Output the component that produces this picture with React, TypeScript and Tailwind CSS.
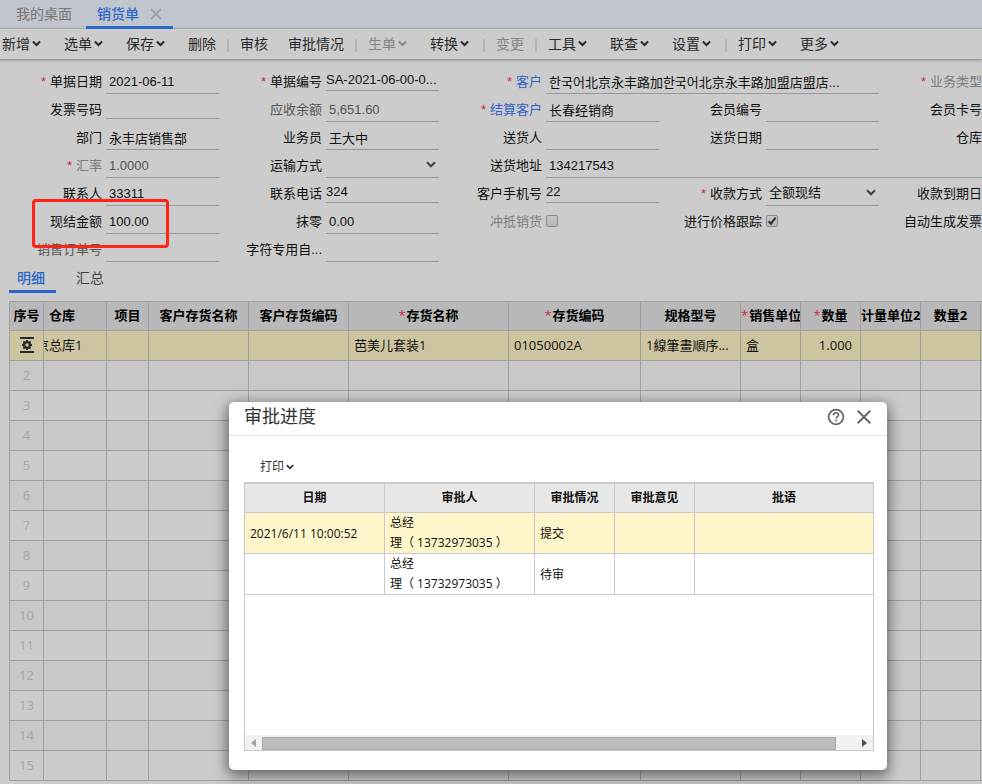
import React from 'react';

interface FormField {
  id: string;
  label: string;
  kind?: 'text' | 'select' | 'check';
  value?: string;
  checked?: boolean;
  required?: boolean;
  short?: boolean;
  tone?: string;
  span?: string;
}

const TABLE_FONT = "font-['Open_Sans','Noto_Sans_CJK_SC',sans-serif]";

const TOOLBAR: { label: string; menu?: boolean; disabled?: boolean; divider?: boolean }[] = [
  { label: '新增', menu: true },
  { label: '选单', menu: true },
  { label: '保存', menu: true },
  { label: '删除', divider: true },
  { label: '审核' },
  { label: '审批情况', divider: true },
  { label: '生单', menu: true, disabled: true },
  { label: '转换', menu: true, divider: true },
  { label: '变更', disabled: true, divider: true },
  { label: '工具', menu: true },
  { label: '联查', menu: true },
  { label: '设置', menu: true, divider: true },
  { label: '打印', menu: true },
  { label: '更多', menu: true },
];

const FIELDS: FormField[] = [
  { id: 'date', label: '单据日期', value: '2021-06-11', required: true },
  { id: 'code', label: '单据编号', value: 'SA-2021-06-00-0...', required: true, short: true },
  { id: 'customer', label: '客户', value: '한국어北京永丰路加한국어北京永丰路加盟店盟店...', required: true, tone: 'text-[#3264c8]', span: 'col-span-2' },
  { id: 'bizType', label: '业务类型', required: true, tone: 'text-[#7d7d7d]' },

  { id: 'invoiceNo', label: '发票号码', short: true },
  { id: 'receivable', label: '应收余额', value: '5,651.60', tone: 'text-[#555555]' },
  { id: 'settle', label: '结算客户', value: '长春经销商', required: true, tone: 'text-[#3264c8]' },
  { id: 'memberNo', label: '会员编号' },
  { id: 'cardNo', label: '会员卡号' },

  { id: 'dept', label: '部门', value: '永丰店销售部' },
  { id: 'clerk', label: '业务员', value: '王大中' },
  { id: 'deliverer', label: '送货人' },
  { id: 'deliverDate', label: '送货日期' },
  { id: 'warehouse', label: '仓库' },

  { id: 'rate', label: '汇率', value: '1.0000', required: true, tone: 'text-[#7d7d7d]' },
  { id: 'transport', label: '运输方式', kind: 'select', value: '' },
  { id: 'address', label: '送货地址', value: '134217543', span: 'col-span-3' },

  { id: 'contact', label: '联系人', value: '33311' },
  { id: 'phone', label: '联系电话', value: '324', short: true },
  { id: 'mobile', label: '客户手机号', value: '22', short: true },
  { id: 'payType', label: '收款方式', kind: 'select', value: '全额现结', required: true },
  { id: 'dueDate', label: '收款到期日' },

  { id: 'cash', label: '现结金额', value: '100.00' },
  { id: 'rounding', label: '抹零', value: '0.00' },
  { id: 'offset', label: '冲抵销货', kind: 'check', tone: 'text-[#7d7d7d]' },
  { id: 'trackPrice', label: '进行价格跟踪', kind: 'check', checked: true },
  { id: 'autoInvoice', label: '自动生成发票', kind: 'check' },

  { id: 'orderNo', label: '销售订单号', tone: 'text-[#555555]' },
  { id: 'custom', label: '字符专用自...' },
];

const COLUMNS: { title: string; width: string; required?: boolean; left?: boolean }[] = [
  { title: '序号', width: 'w-[34px]' },
  { title: '仓库', width: 'w-[63px]', left: true },
  { title: '项目', width: 'w-[42px]' },
  { title: '客户存货名称', width: 'w-[100px]' },
  { title: '客户存货编码', width: 'w-[100px]' },
  { title: '存货名称', width: 'w-[160px]', required: true },
  { title: '存货编码', width: 'w-[132px]', required: true },
  { title: '规格型号', width: 'w-[100px]' },
  { title: '销售单位', width: 'w-[60px]', required: true },
  { title: '数量', width: 'w-[60px]', required: true },
  { title: '计量单位2', width: 'w-[60px]' },
  { title: '数量2', width: 'w-[60px]' },
  { title: '', width: 'w-[100px]' },
];

const FIRST_ROW = ['', '京总库1', '', '', '', '芭美儿套装1', '01050002A', '1線筆畫順序...', '盒', '1.000', '', '', ''];
const EMPTY_ROWS = Array.from({ length: 14 }, (_, i) => i + 2);

const APPROVALS = [
  { time: '2021/6/11 10:00:52', status: '提交', row: 'bg-[#fef5cb]' },
  { time: '', status: '待审', row: 'bg-white' },
];

const Chevron: React.FC<{ className?: string }> = ({ className = '' }) => (
  <svg viewBox="0 0 10 7" className={className} fill="none" stroke="currentColor" strokeWidth="2.2" aria-hidden="true">
    <path d="M1 1.3 5 5.2 9 1.3" />
  </svg>
);

const Field: React.FC<{ field: FormField }> = ({ field }) => {
  const { id, label, kind = 'text', value = '', tone = 'text-[#111111]' } = field;
  const grey = tone === 'text-[#7d7d7d]' || tone === 'text-[#555555]';
  const box = `w-full border-b border-[#999999] bg-transparent pt-[2px] outline-none ${grey ? 'text-[#555555]' : 'text-[#111111]'} ${field.short ? 'h-6' : 'h-[27px] pl-[3px]'}`;

  return (
    <div className={`flex min-w-0 items-start gap-1 pr-px ${field.span ?? ''}`}>
      <label htmlFor={id} className={`w-[102px] shrink-0 whitespace-nowrap text-right leading-[30px] ${tone}`}>
        {field.required && <span className="mr-1 text-[#c82846]">*</span>}
        {label}
      </label>
      {kind === 'text' && <input id={id} type="text" defaultValue={value} className={box} />}
      {kind === 'select' && (
        <div className="relative w-full">
          <select id={id} defaultValue={value} className={`appearance-none ${box}`}>
            <option value={value}>{value}</option>
          </select>
          <Chevron className="pointer-events-none absolute right-[3px] top-2.5 h-[7px] w-2.5 text-[#444444]" />
        </div>
      )}
      {kind === 'check' && (
        <span className="relative mt-2 size-3">
          <input
            id={id}
            type="checkbox"
            defaultChecked={field.checked}
            className="peer block size-3 appearance-none rounded-[2px] border border-[#8a8a8a] bg-linear-to-b from-[#c8c8c8] to-[#b6b6b6]"
          />
          <svg viewBox="0 0 12 12" className="pointer-events-none absolute inset-0 hidden size-3 peer-checked:block" fill="none" stroke="#333333" strokeWidth="2.2" aria-hidden="true">
            <path d="M2.6 6.2 5 8.6 9.6 2.6" />
          </svg>
        </span>
      )}
    </div>
  );
};

const RowTool: React.FC = () => (
  <button type="button" aria-label="行操作" className="flex w-full justify-center">
    <svg viewBox="0 0 16 18" className="h-[18px] w-4" fill="none" stroke="#2b2b2b" aria-hidden="true">
      <path d="M1 2h14M1 16h14" strokeWidth="2" />
      <circle cx="8" cy="9" r="2.9" strokeWidth="2.4" />
      <path d="M8 4v1.8M8 12.2V14M3 9h1.8M11.2 9H13M4.4 5.4l1.4 1.4M10.2 11.2l1.4 1.4M4.4 12.6l1.4-1.4M10.2 6.8l1.4-1.4" strokeWidth="1.8" />
    </svg>
  </button>
);

const DetailTable: React.FC = () => (
  <div className="ml-[9px] mt-2 overflow-hidden">
    <table className={`w-[1072px] table-fixed border-separate border-spacing-0 border-l border-t border-[#a0a0a0] text-[13px] leading-5 text-[#111111] ${TABLE_FONT}`}>
      <thead>
        <tr className="h-[29px] bg-[#b9b9b9]">
          {COLUMNS.map((col, i) => (
            <th key={i} className={`${col.width} overflow-hidden whitespace-nowrap border-b border-r border-[#a0a0a0] p-0 pb-[2px] font-bold text-black ${col.left ? 'pl-[5px] text-left' : 'text-center'}`}>
              {col.required && <span className="mr-px font-normal text-[#c82846]">*</span>}
              {col.title}
            </th>
          ))}
        </tr>
      </thead>
      <tbody>
        <tr className="h-[30px] bg-[#ccc5a0]">
          {FIRST_ROW.map((cell, i) => (
            <td key={i} className={`overflow-hidden whitespace-nowrap border-b border-r border-[#a0a0a0] p-0 pb-[2px] ${i === 9 ? 'pr-2 text-right' : i > 1 ? 'pl-[5px]' : ''}`}>
              {i === 0 ? <RowTool /> : i === 1 ? <div className="-ml-2">{cell}</div> : cell}
            </td>
          ))}
        </tr>
        {EMPTY_ROWS.map((n) => (
          <tr key={n} className="h-[30px] odd:bg-[#cccccc] even:bg-[#c8c8c8]">
            {COLUMNS.map((_, i) => (
              <td key={i} className="border-b border-r border-[#a0a0a0] p-0 pb-[2px] text-center text-[#a6a6a6]">
                {i === 0 ? n : ''}
              </td>
            ))}
          </tr>
        ))}
      </tbody>
    </table>
  </div>
);

const ApprovalDialog: React.FC = () => {
  const head = 'border-b border-r border-[#c9c9c9] p-0 font-bold';
  const cell = 'border-b border-r border-[#c9c9c9] px-[5px] pb-0 pt-px';

  return (
    <div
      role="dialog"
      aria-labelledby="approval-title"
      className="absolute left-[229px] top-[402px] w-[658px] rounded-[5px] bg-white pb-[19px] shadow-[0_4px_14px_2px_rgba(0,0,0,0.5)]"
    >
      <div className="flex h-[34px] items-center border-b border-[#e2e2e2] px-[15px] pb-[3px]">
        <h2 id="approval-title" className="flex-1 text-[18px] leading-6 text-[#333333]">审批进度</h2>
        <button type="button" aria-label="帮助" className="mr-[11px] text-[#666666]">
          <svg viewBox="0 0 18 18" className="block size-[18px]" fill="none" stroke="currentColor" aria-hidden="true">
            <circle cx="9" cy="9" r="7.4" strokeWidth="1.8" />
            <path d="M6.5 7.2c0-1.5 1.1-2.4 2.5-2.4s2.5.9 2.5 2.1c0 1.6-2.4 1.7-2.4 3.5" strokeWidth="1.6" />
            <path d="M9.1 11.7v1.7" strokeWidth="1.7" />
          </svg>
        </button>
        <button type="button" aria-label="关闭" className="text-[#666666]">
          <svg viewBox="0 0 16 16" className="block size-4" fill="none" stroke="currentColor" strokeWidth="2" aria-hidden="true">
            <path d="M1.7 1.7l12.6 12.6M14.3 1.7 1.7 14.3" />
          </svg>
        </button>
      </div>

      <button type="button" className="ml-[31px] mt-[21px] flex items-center gap-[2px] text-[12px] leading-5 text-[#333333]">
        打印
        <Chevron className="h-[6px] w-2" />
      </button>

      <div className="ml-[15px] mr-[13px] mt-[5px] flex h-[269px] flex-col border-b border-l border-t-2 border-[#c9c9c9]">
        <table className={`w-full table-fixed border-separate border-spacing-0 text-[12px] leading-5 text-[#111111] ${TABLE_FONT}`}>
          <thead>
            <tr className="h-[29px] bg-[#e7e7e7]">
              <th className={`${head} w-[140px]`}>日期</th>
              <th className={`${head} w-[150px]`}>审批人</th>
              <th className={`${head} w-20`}>审批情况</th>
              <th className={`${head} w-20`}>审批意见</th>
              <th className={head}>批语</th>
            </tr>
          </thead>
          <tbody>
            {APPROVALS.map((item) => (
              <tr key={item.status} className={`h-[41px] ${item.row}`}>
                <td className={cell}>{item.time}</td>
                <td className="border-b border-r border-[#c9c9c9] px-[5px] py-0">总经<br />理（ 13732973035 ）</td>
                <td className={cell}>{item.status}</td>
                <td className={cell}></td>
                <td className={cell}></td>
              </tr>
            ))}
          </tbody>
        </table>
        <div className="flex-1 border-r border-[#c9c9c9]"></div>
        <div className="flex h-[15px] items-center border-r border-[#c9c9c9] bg-[#f1f1f1] px-[6px]">
          <svg viewBox="0 0 5 8" className="h-2 w-[5px]" fill="#a3a3a3" aria-hidden="true"><path d="M5 0v8L0 4z" /></svg>
          <div className="ml-[6px] mr-[26px] mt-[2px] h-[13px] flex-1 border border-[#a8a8a8] bg-[#bcbcbc]"></div>
          <svg viewBox="0 0 5 8" className="h-2 w-[5px]" fill="#505050" aria-hidden="true"><path d="M0 0v8l5-4z" /></svg>
        </div>
      </div>
    </div>
  );
};

const App: React.FC = () => {
  return (
    <div className="relative min-h-screen overflow-hidden bg-[#cccccc] pb-[3px] font-['Liberation_Sans','Noto_Sans_CJK_SC',sans-serif] text-[#111111]">
      <nav className="flex h-[29px] border-b border-[#b4b7bf] bg-[#c1c5ce] text-[14px] leading-7">
        <a href="#desktop" className="w-[86px] pl-4 text-[#777777]">我的桌面</a>
        <div className="-mb-px flex w-[87px] items-start border-b-3 border-[#2b69c9] pl-[11px]">
          <a href="#sales" className="font-medium text-[#2b69c9]">销货单</a>
          <button type="button" aria-label="关闭标签" className="ml-[11px] mt-2 text-[#999999]">
            <svg viewBox="0 0 12 12" className="block size-3" fill="none" stroke="currentColor" strokeWidth="1.7" aria-hidden="true">
              <path d="M1 1l10 10M11 1 1 11" />
            </svg>
          </button>
        </div>
      </nav>

      <div className="-ml-2 flex h-[30px] items-center whitespace-nowrap text-[14px] leading-7 shadow-[0_1px_3px_rgba(0,0,0,0.35)]">
        {TOOLBAR.map((item) => (
          <React.Fragment key={item.label}>
            <button
              type="button"
              disabled={item.disabled}
              className={`flex shrink-0 items-center pl-2.5 ${item.menu ? 'pr-[13px]' : 'pr-2.5'} ${item.disabled ? 'text-[#858585]' : 'text-[#2b2b2b]'}`}
            >
              {item.label}
              {item.menu && <Chevron className="mb-px ml-[2px] h-[7px] w-[9px]" />}
            </button>
            {item.divider && <span className="mx-px mt-[2px] h-[13px] w-[2px] shrink-0 bg-[#b3b5bd]"></span>}
          </React.Fragment>
        ))}
      </div>

      <form className="relative overflow-hidden pt-2 text-[13px]">
        <div className="grid auto-rows-[28px] grid-cols-[repeat(5,220px)]">
          {FIELDS.map((field) => <Field key={field.id} field={field} />)}
        </div>
        <div className="pointer-events-none absolute left-8 top-[140px] h-[49px] w-[137px] rounded-[4px] border-3 border-[#ff2414]"></div>
      </form>

      <div className="ml-[9px] mt-[2px] flex gap-3 text-[14px] leading-[23px]">
        <button type="button" className="w-[47px] border-b-3 border-[#2b69c9] pr-[3px] pt-[2px] font-medium text-[#2b69c9]">明细</button>
        <button type="button" className="w-[47px] border-b-3 border-transparent pr-[3px] pt-[2px] text-[#444444]">汇总</button>
      </div>

      <DetailTable />
      <ApprovalDialog />
    </div>
  );
};

export default App;
